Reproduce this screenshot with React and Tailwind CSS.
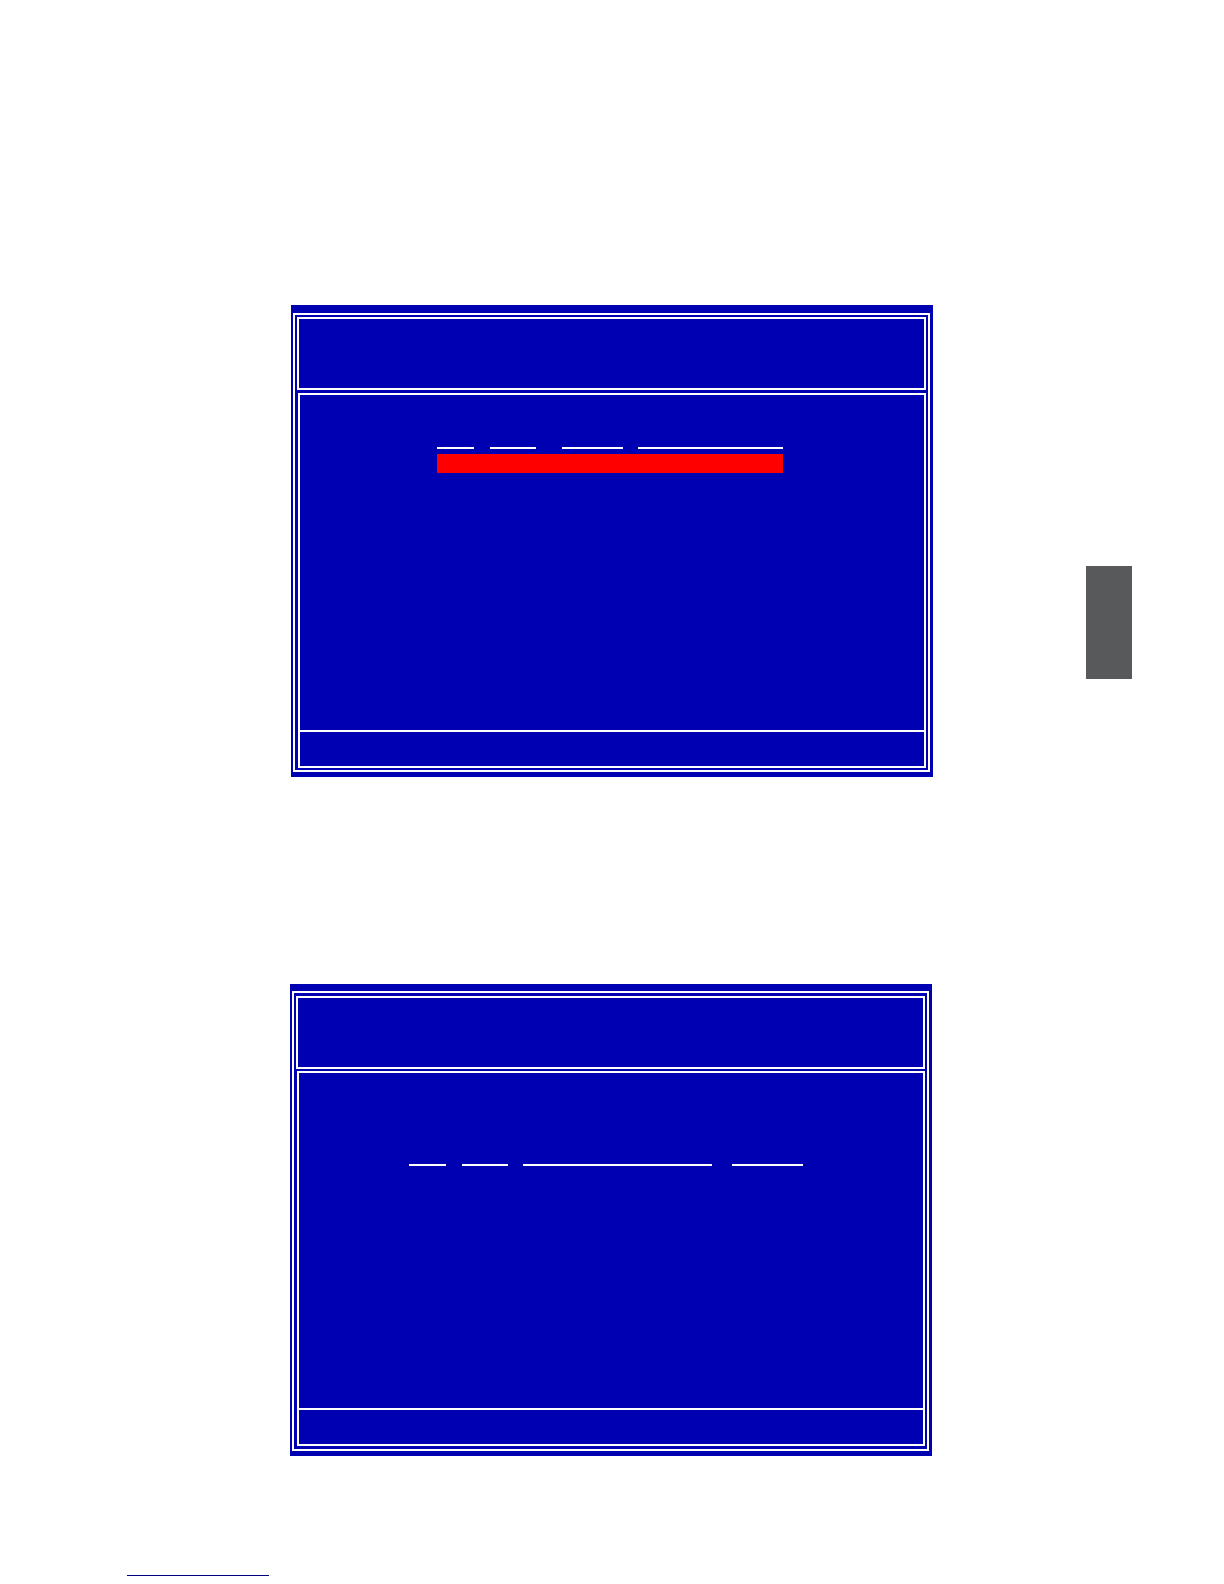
import React from "react";

// widths of the column rules and the space before each one
const deviceColumns = [
  "w-[37px]",
  "w-[46px] ml-4",
  "w-[61px] ml-[26px]",
  "w-[145px] ml-[15px]",
];

const volumeColumns = [
  "w-[37px]",
  "w-[46px] ml-4",
  "w-[189px] ml-[15px]",
  "w-[71px] ml-5",
];

const ColumnRules = ({ columns }) => {
  return (
    <div className="flex">
      {columns.map((column) => (
        <div key={column} className={`h-[2px] bg-white ${column}`} />
      ))}
    </div>
  );
};

const Screen = ({ className, frameClass, gapClass, children }) => {
  return (
    <section
      className={`w-full max-w-[642px] bg-[#0000b3] pl-[2px] pr-[3px] pb-[5px] ${className}`}
    >
      <div className={`border-2 border-white px-[2px] ${frameClass}`}>
        <header className="h-[73px] border-2 border-white" />
        <div className={`ml-px border-2 border-white ${gapClass}`}>
          <div className="h-[335px] flex flex-col items-center">{children}</div>
          <footer className="h-9 border-t-2 border-white" />
        </div>
      </div>
    </section>
  );
};

const App = () => {
  return (
    <main className="bg-white flex flex-col pt-[305px] pb-2">
      <div className="grid grid-cols-[1fr_minmax(0,642px)_1fr]">
        <Screen
          className="col-start-2 pt-2"
          frameClass="pt-[2px] pb-[2px]"
          gapClass="mt-[3px]"
        >
          <div className="pt-[52px] pr-1">
            <ColumnRules columns={deviceColumns} />
            <div className="mt-[5px] h-[19px] bg-[#ff0000]" />
          </div>
        </Screen>
        <aside className="col-start-3 justify-self-end mt-[261px] mr-[92px] w-[46px] h-[113px] bg-[#58595b]" />
      </div>

      <div className="mt-[207px] pr-[2px] flex justify-center">
        <Screen
          className="pt-[7px]"
          frameClass="pt-[3px] pb-[3px]"
          gapClass="mt-[2px]"
        >
          <div className="pt-[91px] pr-[10px]">
            <ColumnRules columns={volumeColumns} />
          </div>
        </Screen>
      </div>

      <hr className="mt-[119px] ml-[127px] w-[142px] border-t border-[#00007f]" />
    </main>
  );
};

export default App;
